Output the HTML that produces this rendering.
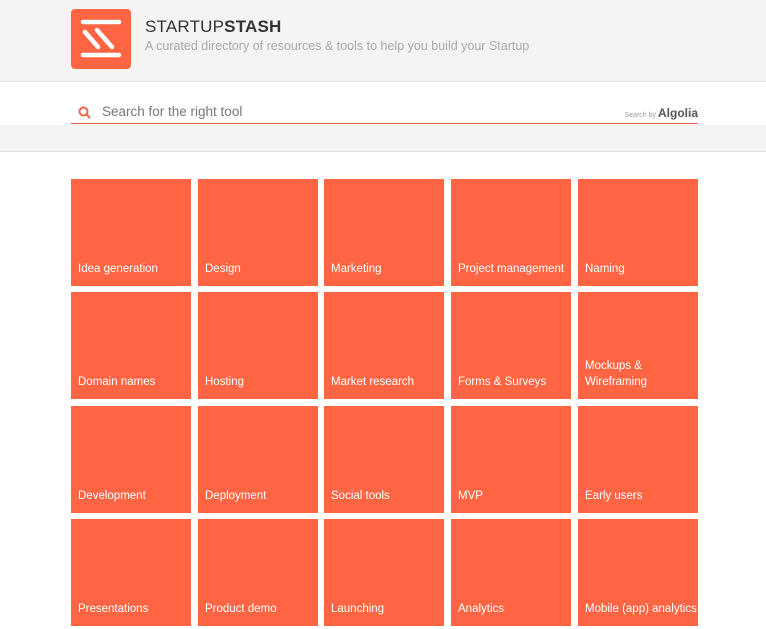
<!DOCTYPE html>
<html><head><style>
body{margin:0;width:766px;height:629px;overflow:hidden;background:#fff;font-family:"Liberation Sans",sans-serif;}
.hdr{position:absolute;left:0;top:0;width:766px;height:81px;background:#f4f4f4;border-bottom:1px solid #e4e4e4;}
.logo{position:absolute;left:71px;top:9px;width:60px;height:60px;background:#ff6543;border-radius:4px;}
.t1{position:absolute;left:145px;top:17px;font-size:17px;color:#333;letter-spacing:0.2px;}
.t2{position:absolute;left:145px;top:39px;font-size:12.5px;color:#aaa;}
.search{position:absolute;left:71px;top:100px;width:627px;height:23px;border-bottom:1.5px solid #f0654a;}
.search .ph{position:absolute;left:31px;top:4px;font-size:13.5px;color:#777;}
.alg{position:absolute;right:0;top:6px;font-size:7px;color:#999;}
.alg b{font-size:12px;color:#555;font-weight:bold;}
.band{position:absolute;left:0;top:125px;width:766px;height:26px;background:#f4f4f4;border-bottom:1px solid #e4e4e4;}
.tile{position:absolute;width:120px;height:107px;background:#ff6543;}
.tile span{position:absolute;left:7px;bottom:9px;font-size:11.5px;color:#fff;line-height:16px;}
</style></head><body>
<div class="hdr">
<div class="logo"><svg width="60" height="60"><g stroke="#fff" stroke-width="4.5" stroke-linecap="round" fill="none"><line x1="12" y1="13" x2="48" y2="13"/><line x1="12" y1="46" x2="48" y2="46"/><line x1="14" y1="23" x2="27" y2="38"/><line x1="26" y1="21" x2="41" y2="38"/></g></svg></div>
<div class="t1">STARTUP<b>STASH</b></div>
<div class="t2">A curated directory of resources &amp; tools to help you build your Startup</div>
</div>
<div class="search">
<svg style="position:absolute;left:7px;top:6px" width="13" height="13"><circle cx="5.5" cy="5.5" r="4" stroke="#f0654a" stroke-width="2" fill="none"/><line x1="8.5" y1="8.5" x2="12" y2="12" stroke="#f0654a" stroke-width="2"/></svg>
<span class="ph">Search for the right tool</span>
<span class="alg">Search by <b>Algolia</b></span>
</div>
<div class="band"></div>
<div class="tile" style="left:71px;top:179px"><span>Idea generation</span></div>
<div class="tile" style="left:198px;top:179px"><span>Design</span></div>
<div class="tile" style="left:324px;top:179px"><span>Marketing</span></div>
<div class="tile" style="left:451px;top:179px"><span>Project management</span></div>
<div class="tile" style="left:578px;top:179px"><span>Naming</span></div>
<div class="tile" style="left:71px;top:292px"><span>Domain names</span></div>
<div class="tile" style="left:198px;top:292px"><span>Hosting</span></div>
<div class="tile" style="left:324px;top:292px"><span>Market research</span></div>
<div class="tile" style="left:451px;top:292px"><span>Forms &amp; Surveys</span></div>
<div class="tile" style="left:578px;top:292px"><span>Mockups &amp;<br>Wireframing</span></div>
<div class="tile" style="left:71px;top:406px"><span>Development</span></div>
<div class="tile" style="left:198px;top:406px"><span>Deployment</span></div>
<div class="tile" style="left:324px;top:406px"><span>Social tools</span></div>
<div class="tile" style="left:451px;top:406px"><span>MVP</span></div>
<div class="tile" style="left:578px;top:406px"><span>Early users</span></div>
<div class="tile" style="left:71px;top:519px"><span>Presentations</span></div>
<div class="tile" style="left:198px;top:519px"><span>Product demo</span></div>
<div class="tile" style="left:324px;top:519px"><span>Launching</span></div>
<div class="tile" style="left:451px;top:519px"><span>Analytics</span></div>
<div class="tile" style="left:578px;top:519px"><span style="white-space:nowrap">Mobile (app) analytics</span></div>
</body></html>
